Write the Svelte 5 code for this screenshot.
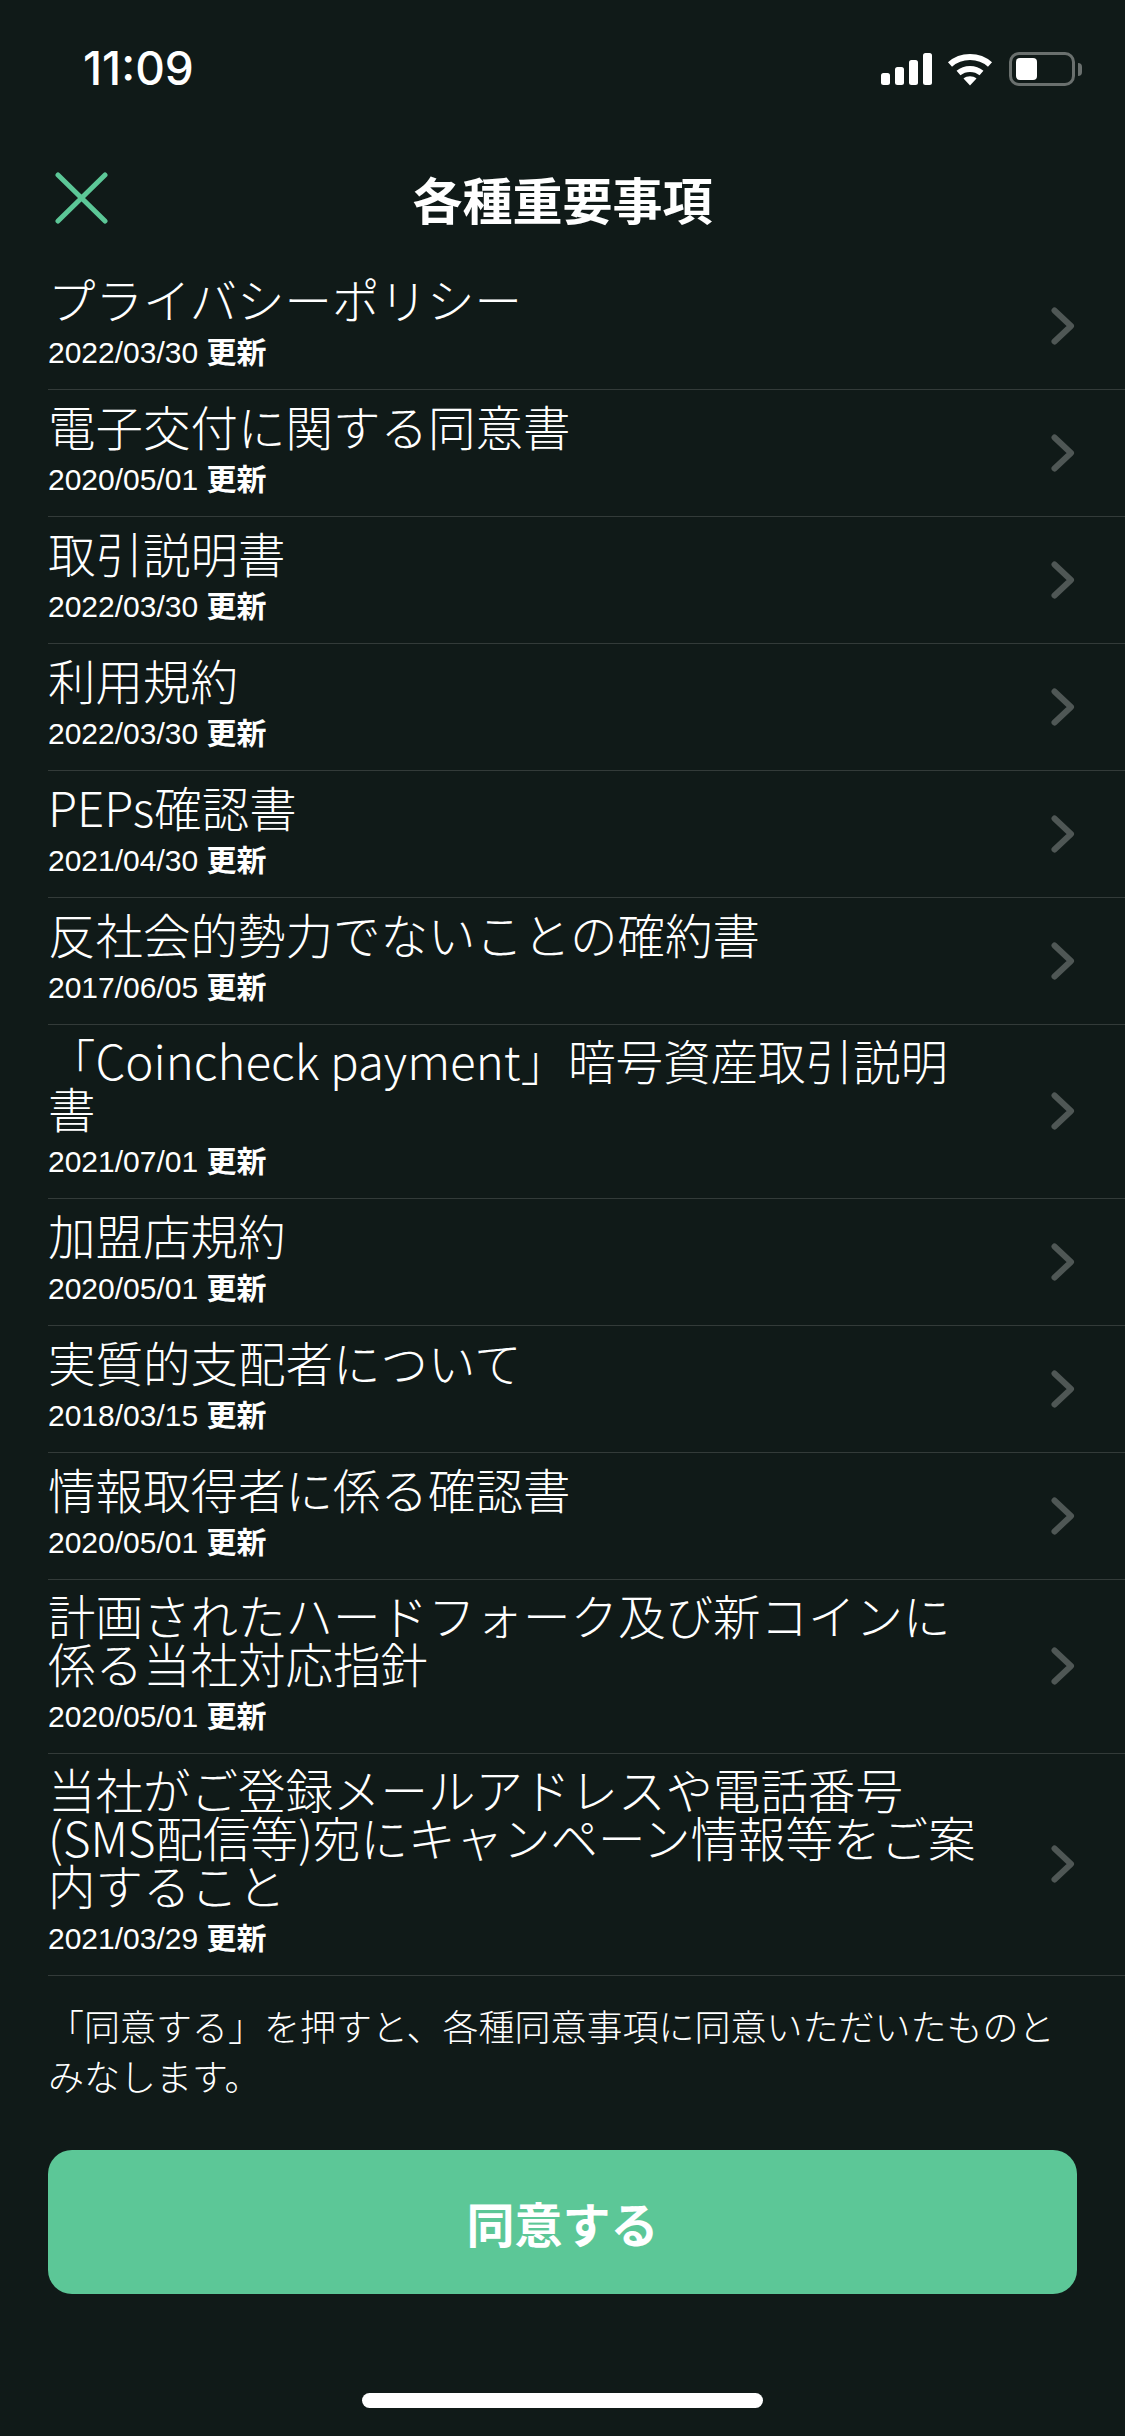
<script>
	const docs = [
		{ title: 'プライバシーポリシー', date: '2022/03/30' },
		{ title: '電子交付に関する同意書', date: '2020/05/01' },
		{ title: '取引説明書', date: '2022/03/30' },
		{ title: '利用規約', date: '2022/03/30' },
		{ title: 'PEPs確認書', date: '2021/04/30' },
		{ title: '反社会的勢力でないことの確約書', date: '2017/06/05' },
		{ title: '「Coincheck payment」暗号資産取引説明書', date: '2021/07/01' },
		{ title: '加盟店規約', date: '2020/05/01' },
		{ title: '実質的支配者について', date: '2018/03/15' },
		{ title: '情報取得者に係る確認書', date: '2020/05/01' },
		{ title: '計画されたハードフォーク及び新コインに係る当社対応指針', date: '2020/05/01' },
		{ title: '当社がご登録メールアドレスや電話番号(SMS配信等)宛にキャンペーン情報等をご案内すること', date: '2021/03/29' }
	];
</script>

<div class="screen" lang="ja">
	<div class="status">
		<span class="time">11:09</span>
		<div class="status-icons">
			<svg class="signal" width="51" height="32" viewBox="0 0 51 32" fill="#fff">
				<rect x="0" y="20" width="9" height="12" rx="2.5" />
				<rect x="14" y="14" width="9" height="18" rx="2.5" />
				<rect x="28" y="7" width="9" height="25" rx="2.5" />
				<rect x="42" y="0" width="9" height="32" rx="2.5" />
			</svg>
			<svg class="wifi" width="46" height="33" viewBox="0 0 46 33" fill="none" stroke="#fff" stroke-width="6">
				<path d="M3 11.5C14 1.5 32 1.5 43 11.5" />
				<path d="M11.5 20C18 14.5 28 14.5 34.500 20" />
				<path d="M16.500 25.500L23 32.500L29.500 25.500C26 22.500 20 22.500 16.500 25.500Z" fill="#fff" stroke="none" />
			</svg>
			<div class="battery"><div class="charge"></div></div>
			<div class="nub"></div>
		</div>
	</div>

	<header>
		<svg class="close" width="53" height="52" viewBox="0 0 53 52" fill="none" stroke="#5cc797" stroke-width="5" stroke-linecap="round">
			<path d="M3 3L50 49M50 3L3 49" />
		</svg>
		<h1>各種重要事項</h1>
	</header>

	<ul>
		{#each docs as doc}
			<li>
				<div class="text">
					<div class="title">{doc.title}</div>
					<div class="date">{doc.date} <b>更新</b></div>
				</div>
				<svg class="chevron" width="24" height="38" viewBox="0 0 24 38" fill="none" stroke="#4f5755" stroke-width="6" stroke-linecap="round" stroke-linejoin="round">
					<path d="M3.500 3.500L20 19L3.500 34.500" />
				</svg>
			</li>
		{/each}
	</ul>

	<p class="note">「同意する」を押すと、各種同意事項に同意いただいたものとみなします。</p>

	<button>同意する</button>

	<div class="home"></div>
</div>

<style>
	:global(body) {
		background: #101a18;
	}

	.screen {
		width: 1125px;
		height: 2436px;
		background: #101a18;
		color: #fff;
		font-family: "Noto Sans CJK JP", "Noto Sans", sans-serif;
		display: flex;
		flex-direction: column;
		overflow: hidden;
	}

	.status {
		height: 132px;
		padding: 44px 43px 0 83px;
		box-sizing: border-box;
		display: flex;
		justify-content: space-between;
		align-items: flex-start;
	}

	.time {
		font-family: Inter, "Liberation Sans", sans-serif;
		font-size: 46px;
		font-weight: 500;
		line-height: 48px;
	}

	.status-icons {
		display: flex;
		align-items: center;
		margin-top: 8px;
	}

	.wifi {
		margin-left: 15px;
	}

	.battery {
		width: 66px;
		height: 34px;
		margin-left: 16px;
		box-sizing: border-box;
		border: 3px solid #6a706e;
		border-radius: 10px;
		padding: 3px 4px;
	}

	.charge {
		width: 21px;
		height: 22px;
		background: #fff;
		border-radius: 4px;
	}

	.nub {
		width: 4px;
		height: 13px;
		margin-left: 3px;
		background: #6a706e;
		border-radius: 0 4px 4px 0;
	}

	header {
		height: 131px;
		position: relative;
		display: flex;
		align-items: center;
		justify-content: center;
	}

	.close {
		position: absolute;
		left: 55px;
		top: 40px;
	}

	h1 {
		margin: 0;
		font-size: 50px;
		font-weight: 700;
		line-height: 60px;
	}

	ul {
		list-style: none;
		margin: 0 0 0 48px;
		padding: 0;
	}

	li {
		box-sizing: border-box;
		min-height: 127px;
		padding: 11px 50px 12px 0;
		border-bottom: 1px solid #333b39;
		display: flex;
		align-items: center;
		justify-content: space-between;
	}

	.text {
		width: 930px;
	}

	.title {
		font-size: 47.500px;
		font-weight: 300;
		line-height: 48px;
	}

	.date {
		font-size: 30px;
		line-height: 54px;
		height: 54px;
		font-family: "Liberation Sans", "Noto Sans CJK JP", sans-serif;
	}

	.date b {
		font-weight: 700;
		font-family: "Noto Sans CJK JP", sans-serif;
	}

	.note {
		margin: 24px 48px 0;
		font-size: 36px;
		font-weight: 300;
		line-height: 50px;
	}

	button {
		margin: 50px 48px 0;
		height: 144px;
		flex-shrink: 0;
		border: 0;
		border-radius: 24px;
		background: #5cc797;
		color: #fff;
		font-family: inherit;
		font-size: 48px;
		font-weight: 700;
	}

	.home {
		width: 401px;
		height: 15px;
		margin: 99px auto 0;
		background: #fff;
		border-radius: 8px;
	}
</style>
